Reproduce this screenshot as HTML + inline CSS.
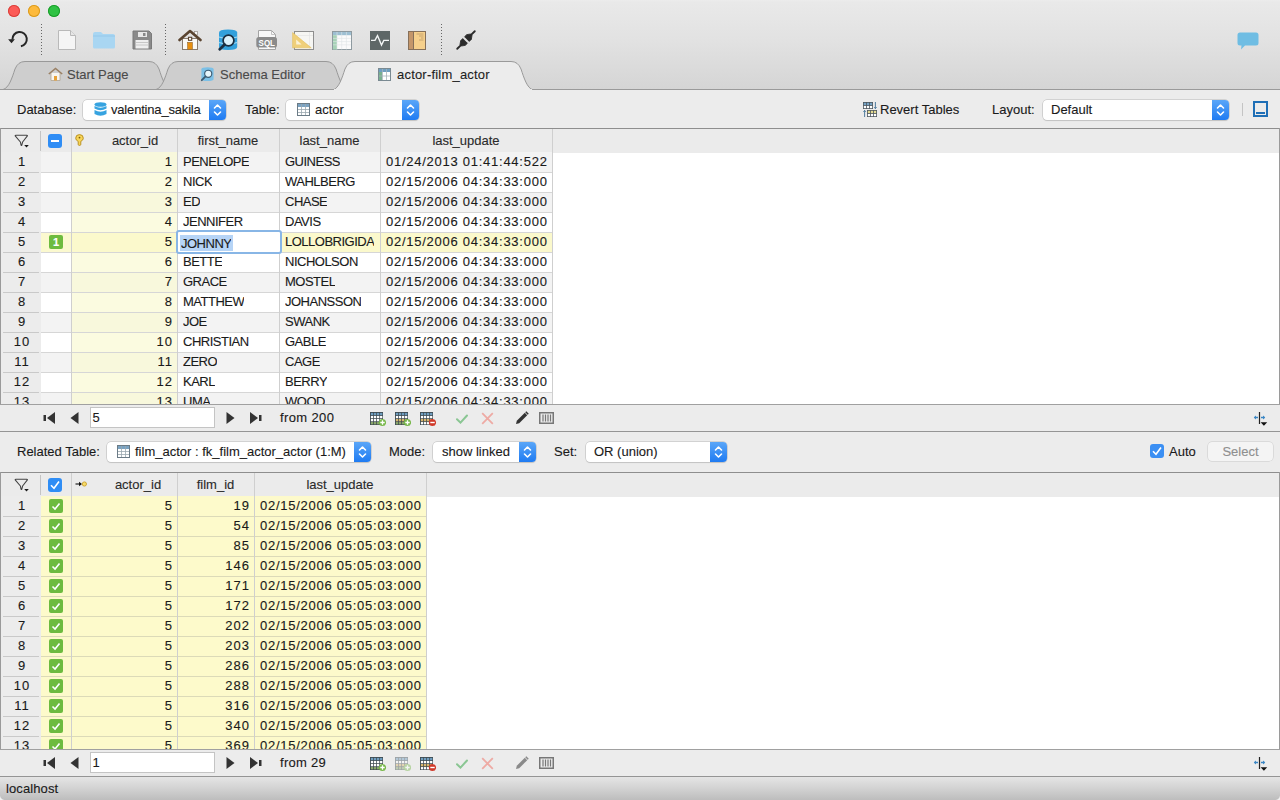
<!DOCTYPE html><html><head><meta charset="utf-8"><style>
*{margin:0;padding:0;box-sizing:border-box}
html,body{width:1280px;height:800px;overflow:hidden;background:#ececec;font-family:"Liberation Sans",sans-serif;font-size:13px;color:#1a1a1a;position:relative;-webkit-text-stroke:0.12px currentColor}
.a{position:absolute}
.t{position:absolute;white-space:nowrap;line-height:16px}
.tb{left:0;top:0;width:1280px;height:90px;background:linear-gradient(#ececec 0px,#e9e9e9 2px,#e2e2e2 40px,#d5d5d5 89px)}
.sep{position:absolute;width:1px;top:24px;height:31px;background:repeating-linear-gradient(#666 0 1px,transparent 1px 3px)}
.line{position:absolute;background:#b4b4b4}
.combo{position:absolute;height:20px;background:#fff;border-radius:4px;box-shadow:0 0 0 0.5px #b8b8b8,0 1px 1px rgba(0,0,0,.12)}
.combo .bl{position:absolute;right:0;top:0;bottom:0;width:17px;border-radius:0 4px 4px 0;background:linear-gradient(#5aa6f8,#1f7bf2)}
.combo .bl svg{position:absolute;left:4px;top:3px}
.grid{position:absolute;left:0;width:1280px;background:#fff;overflow:hidden}
.hdr{position:absolute;left:0;top:0;width:1280px;height:24px;background:#ebebeb}
.vl{position:absolute;width:1px;background:#cfcfcf}
.hl{position:absolute;height:1px;background:#d6d6d6}
.cell{position:absolute;height:20px;line-height:20px;white-space:nowrap;overflow:hidden}
.nav{position:absolute;left:0;width:1280px;height:26px;background:#ececec}
.inp{position:absolute;height:21px;background:#fff;box-shadow:0 0 0 1px #c4c4c4 inset;line-height:22px;padding-left:2.5px}
</style></head><body><div class="a tb"></div><div class="a" style="left:8px;top:5px;width:12px;height:12px;border-radius:50%;background:#fc5b57;box-shadow:0 0 0 1px #d9403b inset"></div><div class="a" style="left:28px;top:5px;width:12px;height:12px;border-radius:50%;background:#fdba3c;box-shadow:0 0 0 1px #d99a1e inset"></div><div class="a" style="left:48px;top:5px;width:12px;height:12px;border-radius:50%;background:#2fc243;box-shadow:0 0 0 1px #1a9c2a inset"></div><svg class="a" style="left:7px;top:30px" width="22" height="19" viewBox="0 0 22 19"><path d="M5.4 9.6 A7.2 7.2 0 1 1 13.9 16.3" stroke="#262626" stroke-width="2" fill="none"/><path d="M1.1 9.2 L7.9 9.2 L4.5 13.2 Z" fill="#262626"/></svg><div class="sep" style="left:41px"></div><div class="sep" style="left:165px"></div><div class="sep" style="left:441px"></div><svg class="a" style="left:58px;top:30px" width="18" height="20" viewBox="0 0 18 20"><path d="M0.5 0.5 H12.5 L17.5 5.5 V19.5 H0.5 Z" fill="#f5f5f5" stroke="#b9b9b9"/><path d="M12.5 0.5 V5.5 H17.5" fill="#e6e6e6" stroke="#b9b9b9"/></svg><svg class="a" style="left:92px;top:31px" width="24" height="18" viewBox="0 0 24 18"><path d="M1 3 Q1 1 3 1 H9 L11 3 H21 Q23 3 23 5 V16 Q23 17.5 21.5 17.5 H2.5 Q1 17.5 1 16 Z" fill="#a9d6f2"/><path d="M1 5 H23" stroke="#95c8ea" stroke-width="1"/></svg><svg class="a" style="left:132px;top:30px" width="20" height="20" viewBox="0 0 20 20"><path d="M1 1 H17 L19.5 3.5 V19 H1 Z" fill="#8a8a8a" stroke="#7a7a7a"/><rect x="6" y="2" width="9" height="5" fill="#e8e8e8"/><rect x="11" y="3" width="2.5" height="3" fill="#888"/><rect x="3.5" y="10" width="13" height="8.5" fill="#efefef"/><path d="M4 12.5H16M4 15H16" stroke="#c8c8c8"/></svg><svg class="a" style="left:178px;top:29px" width="24" height="22" viewBox="0 0 24 22"><rect x="4.5" y="9.5" width="15" height="11" fill="#fbfaf6" stroke="#8a7d70"/><rect x="16.5" y="2.5" width="3" height="3.5" fill="#fafafa" stroke="#a09a94" stroke-width="0.8"/><path d="M1.5 11 L12 2 L22.5 11" fill="none" stroke="#5a4430" stroke-width="2.6" stroke-linejoin="round" stroke-linecap="round"/><rect x="10.5" y="8.3" width="3.2" height="3" fill="#fff" stroke="#5a4430" stroke-width="1.1"/><rect x="9.6" y="13.3" width="4.8" height="7" fill="#e8900f" stroke="#9a6a30" stroke-width="0.6"/></svg><svg class="a" style="left:217px;top:29px" width="22" height="22" viewBox="0 0 22 22"><path d="M2 3.5 Q2 0.6 11 0.6 Q20.2 0.6 20.2 3.5 V18 Q20.2 21 11 21 Q2 21 2 18 Z" fill="#32a0dc"/><path d="M2 8 Q11 11 20.2 8 M2 13.5 Q11 16.5 20.2 13.5" stroke="#9ad8f4" stroke-width="1.3" fill="none"/><circle cx="11.5" cy="11.5" r="5.4" fill="#dbf1fb" stroke="#1b2f42" stroke-width="1.7"/><path d="M7.6 15.6 L2.8 20.2" stroke="#1b2f42" stroke-width="2.8" stroke-linecap="round"/></svg><svg class="a" style="left:256px;top:30px" width="22" height="20" viewBox="0 0 22 20"><path d="M2.5 0.5 H15.5 L19.5 4.5 V19.5 H2.5 Z" fill="#f8f8f8" stroke="#a3a3a3"/><path d="M15.5 0.5 V4.5 H19.5" fill="none" stroke="#b5b5b5" stroke-width="0.8"/><rect x="0.3" y="7" width="20.7" height="10.5" rx="2.6" fill="#8b8b8b"/><text x="2.6" y="15.8" font-family="Liberation Sans" font-size="9.6" font-weight="bold" fill="#fff" textLength="16.4" lengthAdjust="spacingAndGlyphs" style="-webkit-text-stroke:0">SQL</text></svg><svg class="a" style="left:292px;top:31px" width="22" height="19" viewBox="0 0 22 19"><rect x="2.5" y="0.5" width="19" height="18" fill="#f6f6f3" stroke="#8e8e8e"/><path d="M3 4.5H21M17.5 1V18" stroke="#e2e2e2" stroke-width="0.6"/><path d="M0.6 1.6 L0.6 16.8 L19.2 16.8 Z" fill="#efcf7a" stroke="#e3bd5c" stroke-width="0.6" stroke-linejoin="round"/><path d="M4.2 8.4 L4.2 13.5 L9.6 13.5 Z" fill="#fbf2d6"/></svg><svg class="a" style="left:332px;top:31px" width="20" height="19" viewBox="0 0 20 19"><rect x="0.5" y="0.5" width="19" height="18" fill="#fbfbfb" stroke="#8e9aa0"/><rect x="1" y="1" width="18" height="3.2" fill="#9dbfd2"/><rect x="1" y="4.2" width="4" height="14.3" fill="#a6d2b6"/><path d="M5 1V18.5M9.7 1V18.5M14.4 1V18.5M1 7.4H19M1 10.6H19M1 13.8H19" stroke="#dfe4e6" stroke-width="0.6"/></svg><svg class="a" style="left:370px;top:31px" width="20" height="19" viewBox="0 0 20 19"><rect x="0" y="0" width="20" height="19" fill="#5e6767" /><path d="M1 9.4 H5 L7.5 4.6 L11.5 14 L13.8 9.4 H19" stroke="#f2f5f5" stroke-width="1.4" fill="none" stroke-linejoin="miter"/></svg><svg class="a" style="left:408px;top:31px" width="18" height="19" viewBox="0 0 18 19"><rect x="0.5" y="0.5" width="17" height="18" fill="#f6d08c" stroke="#86705a"/><rect x="0.5" y="0.5" width="5" height="18" fill="#c4966a" stroke="#86705a"/><path d="M8.5 3H15.5M11 5H15.5M13 7H15.5M11 9H15.5" stroke="#9a7a50" stroke-width="0.5"/></svg><svg class="a" style="left:454px;top:28px" width="24" height="24" viewBox="0 0 24 24"><g transform="translate(12,12) rotate(-45)" fill="#2b2b2b" stroke="#2b2b2b" stroke-linejoin="round" stroke-width="0.8"><path d="M-1.3 -3.3 H-4.3 L-7.6 -0.9 V0.9 L-4.3 3.3 H-1.3 Z"/><path d="M1.3 -3.3 H4.3 L7.6 -0.9 V0.9 L4.3 3.3 H1.3 Z"/><path d="M-7.5 0 H-12.4 M7.5 0 H12.4" stroke-width="1.9" stroke-linecap="round"/></g></svg><svg class="a" style="left:1237px;top:32px" width="22" height="19" viewBox="0 0 22 19"><path d="M3 0.5 H19 Q21.5 0.5 21.5 3 V11 Q21.5 13.5 19 13.5 H8 L4 17.5 L4.5 13.5 H3 Q0.5 13.5 0.5 11 V3 Q0.5 0.5 3 0.5 Z" fill="#6fbde3"/></svg><svg class="a" style="left:0;top:58px" width="1280" height="32" viewBox="0 58 1280 32"><path d="M3 89.5 C9 88 12 78 15 69 Q18 61.5 25 61.5 L149 61.5 Q156 61.5 159 69 C162 78 165 88 171 89.5 Z" fill="#cecece" stroke="#999"/><path d="M156 89.5 C162 88 165 78 168 69 Q171 61.5 178 61.5 L326 61.5 Q333 61.5 336 69 C339 78 342 88 348 89.5 Z" fill="#cecece" stroke="#999"/><line x1="0" y1="89.5" x2="1280" y2="89.5" stroke="#9a9a9a"/><path d="M333 90 C339 88 342 78 345 69 Q348 61.5 355 61.5 L511 61.5 Q518 61.5 521 69 C524 78 527 88 533 90 Z" fill="#ececec" stroke="#9a9a9a"/><rect x="334" y="89" width="198" height="2" fill="#ececec"/></svg><svg class="a" style="left:48px;top:67px" width="15" height="14" viewBox="0 0 15 14"><path d="M3 6 V13.5 H12 V6" fill="#f8f6f0" stroke="#b3a48f" stroke-width="0.8"/><path d="M0.8 7 L7.5 1.5 L14.2 7" fill="none" stroke="#9a8064" stroke-width="1.6"/><rect x="6" y="9" width="3" height="4.5" fill="#e7a23a"/></svg><div class="t" style="left:67px;top:67px;color:#4a4a4a">Start Page</div><svg class="a" style="left:200px;top:67px" width="15" height="15" viewBox="0 0 21 21"><path d="M2 3 Q2 0.5 10.5 0.5 Q19 0.5 19 3 V17 Q19 19.5 10.5 19.5 Q2 19.5 2 17 Z" fill="#7cc0e6"/><circle cx="11.5" cy="9.5" r="5" fill="#e6f5fb" stroke="#3c5a70" stroke-width="1.6"/><path d="M7.8 13.2 L2.5 18.5" stroke="#3c5a70" stroke-width="2.6" stroke-linecap="round"/></svg><div class="t" style="left:220px;top:67px;color:#4a4a4a">Schema Editor</div><svg class="a" style="left:378px;top:68px" width="13" height="13" viewBox="0 0 13 13"><rect x="0.5" y="0.5" width="12" height="12" fill="#fff" stroke="#7a8a92"/><rect x="1" y="1" width="11" height="3" fill="#6f9fc0"/><rect x="1" y="4" width="3" height="8" fill="#79b08f"/><path d="M4.5 1V12M8.5 1V12M1 8H12" stroke="#a8b4ba" stroke-width="0.8"/></svg><div class="t" style="left:397px;top:67px;color:#1e1e1e;letter-spacing:0.2px">actor-film_actor</div><div class="t" style="left:17px;top:102px">Database:</div><div class="combo" style="left:83px;top:100px;width:143px"><div class="bl"><svg width="9" height="14" viewBox="0 0 9 14"><path d="M1.5 5 L4.5 2 L7.5 5 M1.5 9 L4.5 12 L7.5 9" stroke="#fff" stroke-width="1.6" fill="none" stroke-linecap="round" stroke-linejoin="round"/></svg></div></div><svg class="a" style="left:94px;top:102px" width="13" height="15" viewBox="0 0 13 15"><ellipse cx="6.5" cy="2.5" rx="6" ry="2.3" fill="#36a3e0"/><path d="M0.5 4 Q6.5 7.5 12.5 4 V6.5 Q6.5 10 0.5 6.5 Z M0.5 8 Q6.5 11.5 12.5 8 V12 Q6.5 15.5 0.5 12 Z" fill="#36a3e0"/></svg><div class="t" style="left:111px;top:102px;letter-spacing:-0.18px">valentina_sakila</div><div class="t" style="left:245px;top:102px">Table:</div><div class="combo" style="left:286px;top:100px;width:133px"><div class="bl"><svg width="9" height="14" viewBox="0 0 9 14"><path d="M1.5 5 L4.5 2 L7.5 5 M1.5 9 L4.5 12 L7.5 9" stroke="#fff" stroke-width="1.6" fill="none" stroke-linecap="round" stroke-linejoin="round"/></svg></div></div><svg class="a" style="left:297px;top:103px" width="13" height="13" viewBox="0 0 13 13"><rect x="0.5" y="0.5" width="12" height="12" fill="#fff" stroke="#6b7b86"/><rect x="1" y="1" width="11" height="3" fill="#7ba3c2"/><path d="M4.5 1V12M8.5 1V12M1 6.5H12M1 9.5H12" stroke="#9aa8b0" stroke-width="0.8"/></svg><div class="t" style="left:315px;top:102px">actor</div><svg class="a" style="left:862px;top:101px" width="16" height="17" viewBox="0 0 16 17"><rect x="1" y="1" width="10" height="7" fill="#4f5961"/><rect x="1.80" y="1.80" width="2.27" height="2.30" fill="#77a3c4"/><rect x="4.87" y="1.80" width="2.27" height="2.30" fill="#77a3c4"/><rect x="7.93" y="1.80" width="2.27" height="2.30" fill="#77a3c4"/><rect x="1.80" y="4.90" width="2.27" height="2.30" fill="#ffffff"/><rect x="4.87" y="4.90" width="2.27" height="2.30" fill="#ffffff"/><rect x="7.93" y="4.90" width="2.27" height="2.30" fill="#ffffff"/><rect x="5" y="9" width="10" height="7" fill="#4f5961"/><rect x="5.80" y="9.80" width="2.27" height="2.30" fill="#e3da92"/><rect x="8.87" y="9.80" width="2.27" height="2.30" fill="#e3da92"/><rect x="11.93" y="9.80" width="2.27" height="2.30" fill="#e3da92"/><rect x="5.80" y="12.90" width="2.27" height="2.30" fill="#ffffff"/><rect x="8.87" y="12.90" width="2.27" height="2.30" fill="#ffffff"/><rect x="11.93" y="12.90" width="2.27" height="2.30" fill="#ffffff"/><path d="M13.4 1V7.5M12.2 6.2L13.4 7.6L14.6 6.2" stroke="#3f6f95" stroke-width="0.9" fill="none"/><path d="M2.6 16V9.5M1.4 10.8L2.6 9.4L3.8 10.8" stroke="#3f6f95" stroke-width="0.9" fill="none"/></svg><div class="t" style="left:880px;top:102px">Revert Tables</div><div class="t" style="left:992px;top:102px">Layout:</div><div class="combo" style="left:1043px;top:100px;width:186px"><div class="bl"><svg width="9" height="14" viewBox="0 0 9 14"><path d="M1.5 5 L4.5 2 L7.5 5 M1.5 9 L4.5 12 L7.5 9" stroke="#fff" stroke-width="1.6" fill="none" stroke-linecap="round" stroke-linejoin="round"/></svg></div></div><div class="t" style="left:1051px;top:102px">Default</div><div class="a" style="left:1242px;top:103px;width:1px;height:13px;background:#c4c4c4"></div><div class="a" style="left:1253px;top:101px;width:15px;height:16px;border:2px solid #1f6fb6"></div><div class="a" style="left:1256px;top:112px;width:9px;height:2px;background:#1f6fb6"></div><div class="grid" style="top:128px;height:277px"><div class="a" style="left:0;top:0;width:1280px;height:1px;background:#8e8e8e"></div><div class="hdr" style="top:1px"></div><div class="a" style="left:1px;top:24px;width:40px;height:20px;background:#ececec"></div><div class="a" style="left:41px;top:24px;width:30px;height:20px;background:#f3f3f3"></div><div class="a" style="left:72px;top:24px;width:105px;height:20px;background:#f8f8dc"></div><div class="a" style="left:178px;top:24px;width:101px;height:20px;background:#f3f3f3"></div><div class="a" style="left:280px;top:24px;width:100px;height:20px;background:#f3f3f3"></div><div class="a" style="left:381px;top:24px;width:171px;height:20px;background:#f3f3f3"></div><div class="a" style="left:1px;top:44px;width:40px;height:20px;background:#ececec"></div><div class="a" style="left:41px;top:44px;width:30px;height:20px;background:#ffffff"></div><div class="a" style="left:72px;top:44px;width:105px;height:20px;background:#fbfbe0"></div><div class="a" style="left:178px;top:44px;width:101px;height:20px;background:#ffffff"></div><div class="a" style="left:280px;top:44px;width:100px;height:20px;background:#ffffff"></div><div class="a" style="left:381px;top:44px;width:171px;height:20px;background:#ffffff"></div><div class="a" style="left:1px;top:64px;width:40px;height:20px;background:#ececec"></div><div class="a" style="left:41px;top:64px;width:30px;height:20px;background:#f3f3f3"></div><div class="a" style="left:72px;top:64px;width:105px;height:20px;background:#f8f8dc"></div><div class="a" style="left:178px;top:64px;width:101px;height:20px;background:#f3f3f3"></div><div class="a" style="left:280px;top:64px;width:100px;height:20px;background:#f3f3f3"></div><div class="a" style="left:381px;top:64px;width:171px;height:20px;background:#f3f3f3"></div><div class="a" style="left:1px;top:84px;width:40px;height:20px;background:#ececec"></div><div class="a" style="left:41px;top:84px;width:30px;height:20px;background:#ffffff"></div><div class="a" style="left:72px;top:84px;width:105px;height:20px;background:#fbfbe0"></div><div class="a" style="left:178px;top:84px;width:101px;height:20px;background:#ffffff"></div><div class="a" style="left:280px;top:84px;width:100px;height:20px;background:#ffffff"></div><div class="a" style="left:381px;top:84px;width:171px;height:20px;background:#ffffff"></div><div class="a" style="left:1px;top:104px;width:40px;height:20px;background:#ececec"></div><div class="a" style="left:41px;top:104px;width:30px;height:20px;background:#fbf9cf"></div><div class="a" style="left:72px;top:104px;width:105px;height:20px;background:#fbf9cc"></div><div class="a" style="left:178px;top:104px;width:101px;height:20px;background:#f3f3f3"></div><div class="a" style="left:280px;top:104px;width:100px;height:20px;background:#fbf9cc"></div><div class="a" style="left:381px;top:104px;width:171px;height:20px;background:#fbf9cc"></div><div class="a" style="left:1px;top:124px;width:40px;height:20px;background:#ececec"></div><div class="a" style="left:41px;top:124px;width:30px;height:20px;background:#ffffff"></div><div class="a" style="left:72px;top:124px;width:105px;height:20px;background:#fbfbe0"></div><div class="a" style="left:178px;top:124px;width:101px;height:20px;background:#ffffff"></div><div class="a" style="left:280px;top:124px;width:100px;height:20px;background:#ffffff"></div><div class="a" style="left:381px;top:124px;width:171px;height:20px;background:#ffffff"></div><div class="a" style="left:1px;top:144px;width:40px;height:20px;background:#ececec"></div><div class="a" style="left:41px;top:144px;width:30px;height:20px;background:#f3f3f3"></div><div class="a" style="left:72px;top:144px;width:105px;height:20px;background:#f8f8dc"></div><div class="a" style="left:178px;top:144px;width:101px;height:20px;background:#f3f3f3"></div><div class="a" style="left:280px;top:144px;width:100px;height:20px;background:#f3f3f3"></div><div class="a" style="left:381px;top:144px;width:171px;height:20px;background:#f3f3f3"></div><div class="a" style="left:1px;top:164px;width:40px;height:20px;background:#ececec"></div><div class="a" style="left:41px;top:164px;width:30px;height:20px;background:#ffffff"></div><div class="a" style="left:72px;top:164px;width:105px;height:20px;background:#fbfbe0"></div><div class="a" style="left:178px;top:164px;width:101px;height:20px;background:#ffffff"></div><div class="a" style="left:280px;top:164px;width:100px;height:20px;background:#ffffff"></div><div class="a" style="left:381px;top:164px;width:171px;height:20px;background:#ffffff"></div><div class="a" style="left:1px;top:184px;width:40px;height:20px;background:#ececec"></div><div class="a" style="left:41px;top:184px;width:30px;height:20px;background:#f3f3f3"></div><div class="a" style="left:72px;top:184px;width:105px;height:20px;background:#f8f8dc"></div><div class="a" style="left:178px;top:184px;width:101px;height:20px;background:#f3f3f3"></div><div class="a" style="left:280px;top:184px;width:100px;height:20px;background:#f3f3f3"></div><div class="a" style="left:381px;top:184px;width:171px;height:20px;background:#f3f3f3"></div><div class="a" style="left:1px;top:204px;width:40px;height:20px;background:#ececec"></div><div class="a" style="left:41px;top:204px;width:30px;height:20px;background:#ffffff"></div><div class="a" style="left:72px;top:204px;width:105px;height:20px;background:#fbfbe0"></div><div class="a" style="left:178px;top:204px;width:101px;height:20px;background:#ffffff"></div><div class="a" style="left:280px;top:204px;width:100px;height:20px;background:#ffffff"></div><div class="a" style="left:381px;top:204px;width:171px;height:20px;background:#ffffff"></div><div class="a" style="left:1px;top:224px;width:40px;height:20px;background:#ececec"></div><div class="a" style="left:41px;top:224px;width:30px;height:20px;background:#f3f3f3"></div><div class="a" style="left:72px;top:224px;width:105px;height:20px;background:#f8f8dc"></div><div class="a" style="left:178px;top:224px;width:101px;height:20px;background:#f3f3f3"></div><div class="a" style="left:280px;top:224px;width:100px;height:20px;background:#f3f3f3"></div><div class="a" style="left:381px;top:224px;width:171px;height:20px;background:#f3f3f3"></div><div class="a" style="left:1px;top:244px;width:40px;height:20px;background:#ececec"></div><div class="a" style="left:41px;top:244px;width:30px;height:20px;background:#ffffff"></div><div class="a" style="left:72px;top:244px;width:105px;height:20px;background:#fbfbe0"></div><div class="a" style="left:178px;top:244px;width:101px;height:20px;background:#ffffff"></div><div class="a" style="left:280px;top:244px;width:100px;height:20px;background:#ffffff"></div><div class="a" style="left:381px;top:244px;width:171px;height:20px;background:#ffffff"></div><div class="a" style="left:1px;top:264px;width:40px;height:20px;background:#ececec"></div><div class="a" style="left:41px;top:264px;width:30px;height:20px;background:#f3f3f3"></div><div class="a" style="left:72px;top:264px;width:105px;height:20px;background:#f8f8dc"></div><div class="a" style="left:178px;top:264px;width:101px;height:20px;background:#f3f3f3"></div><div class="a" style="left:280px;top:264px;width:100px;height:20px;background:#f3f3f3"></div><div class="a" style="left:381px;top:264px;width:171px;height:20px;background:#f3f3f3"></div><div class="hl" style="left:3px;top:44px;width:36px;background:#c9c9c9"></div><div class="hl" style="left:41px;top:44px;width:511px"></div><div class="hl" style="left:3px;top:64px;width:36px;background:#c9c9c9"></div><div class="hl" style="left:41px;top:64px;width:511px"></div><div class="hl" style="left:3px;top:84px;width:36px;background:#c9c9c9"></div><div class="hl" style="left:41px;top:84px;width:511px"></div><div class="hl" style="left:3px;top:104px;width:36px;background:#c9c9c9"></div><div class="hl" style="left:41px;top:104px;width:511px"></div><div class="hl" style="left:3px;top:124px;width:36px;background:#c9c9c9"></div><div class="hl" style="left:41px;top:124px;width:511px"></div><div class="hl" style="left:3px;top:144px;width:36px;background:#c9c9c9"></div><div class="hl" style="left:41px;top:144px;width:511px"></div><div class="hl" style="left:3px;top:164px;width:36px;background:#c9c9c9"></div><div class="hl" style="left:41px;top:164px;width:511px"></div><div class="hl" style="left:3px;top:184px;width:36px;background:#c9c9c9"></div><div class="hl" style="left:41px;top:184px;width:511px"></div><div class="hl" style="left:3px;top:204px;width:36px;background:#c9c9c9"></div><div class="hl" style="left:41px;top:204px;width:511px"></div><div class="hl" style="left:3px;top:224px;width:36px;background:#c9c9c9"></div><div class="hl" style="left:41px;top:224px;width:511px"></div><div class="hl" style="left:3px;top:244px;width:36px;background:#c9c9c9"></div><div class="hl" style="left:41px;top:244px;width:511px"></div><div class="hl" style="left:3px;top:264px;width:36px;background:#c9c9c9"></div><div class="hl" style="left:41px;top:264px;width:511px"></div><div class="hl" style="left:3px;top:284px;width:36px;background:#c9c9c9"></div><div class="hl" style="left:41px;top:284px;width:511px"></div><div class="vl" style="left:40px;top:3px;height:20px;background:#c4c4c4"></div><div class="vl" style="left:71px;top:1px;height:276px"></div><div class="vl" style="left:177px;top:1px;height:276px"></div><div class="vl" style="left:279px;top:1px;height:276px"></div><div class="vl" style="left:380px;top:1px;height:276px"></div><div class="vl" style="left:552px;top:1px;height:276px"></div><div class="a" style="left:0;top:0;width:1px;height:277px;background:#9a9a9a"></div><div class="a" style="left:1279px;top:0;width:1px;height:277px;background:#9a9a9a"></div><div class="a" style="left:0;top:276px;width:1280px;height:1px;background:#a0a0a0"></div><div class="cell" style="left:2px;top:24px;width:40px;text-align:center;letter-spacing:1.00px;">1</div><div class="cell" style="left:72px;top:24px;width:101px;text-align:right;letter-spacing:1.00px;">1</div><div class="cell" style="left:183px;top:24px;letter-spacing:-0.50px;">PENELOPE</div><div class="cell" style="left:285px;top:24px;letter-spacing:-0.50px;">GUINESS</div><div class="cell" style="left:386px;top:24px;letter-spacing:0.74px;">01/24/2013 01:41:44:522</div><div class="cell" style="left:2px;top:44px;width:40px;text-align:center;letter-spacing:1.00px;">2</div><div class="cell" style="left:72px;top:44px;width:101px;text-align:right;letter-spacing:1.00px;">2</div><div class="cell" style="left:183px;top:44px;letter-spacing:-0.50px;">NICK</div><div class="cell" style="left:285px;top:44px;letter-spacing:-0.50px;">WAHLBERG</div><div class="cell" style="left:386px;top:44px;letter-spacing:0.74px;">02/15/2006 04:34:33:000</div><div class="cell" style="left:2px;top:64px;width:40px;text-align:center;letter-spacing:1.00px;">3</div><div class="cell" style="left:72px;top:64px;width:101px;text-align:right;letter-spacing:1.00px;">3</div><div class="cell" style="left:183px;top:64px;letter-spacing:-0.50px;">ED</div><div class="cell" style="left:285px;top:64px;letter-spacing:-0.50px;">CHASE</div><div class="cell" style="left:386px;top:64px;letter-spacing:0.74px;">02/15/2006 04:34:33:000</div><div class="cell" style="left:2px;top:84px;width:40px;text-align:center;letter-spacing:1.00px;">4</div><div class="cell" style="left:72px;top:84px;width:101px;text-align:right;letter-spacing:1.00px;">4</div><div class="cell" style="left:183px;top:84px;letter-spacing:-0.50px;">JENNIFER</div><div class="cell" style="left:285px;top:84px;letter-spacing:-0.50px;">DAVIS</div><div class="cell" style="left:386px;top:84px;letter-spacing:0.74px;">02/15/2006 04:34:33:000</div><div class="cell" style="left:2px;top:104px;width:40px;text-align:center;letter-spacing:1.00px;">5</div><div class="a" style="left:49px;top:107px;width:14px;height:14px;border-radius:2px;background:#6dbb3f;color:#fff;font-size:11px;line-height:14px;text-align:center;font-weight:bold">1</div><div class="cell" style="left:72px;top:104px;width:101px;text-align:right;letter-spacing:1.00px;">5</div><div class="a" style="left:176px;top:102px;width:106px;height:24px;background:#fff;border:2.5px solid #88b6e6;border-radius:3px"></div><div class="a" style="left:180px;top:107px;width:53px;height:16px;background:#b6d4f6"></div><div class="cell" style="left:181px;top:106px;letter-spacing:-0.50px;">JOHNNY</div><div class="cell" style="left:285px;top:104px;letter-spacing:-0.50px;">LOLLOBRIGIDA</div><div class="cell" style="left:386px;top:104px;letter-spacing:0.74px;">02/15/2006 04:34:33:000</div><div class="cell" style="left:2px;top:124px;width:40px;text-align:center;letter-spacing:1.00px;">6</div><div class="cell" style="left:72px;top:124px;width:101px;text-align:right;letter-spacing:1.00px;">6</div><div class="cell" style="left:183px;top:124px;letter-spacing:-0.50px;">BETTE</div><div class="cell" style="left:285px;top:124px;letter-spacing:-0.50px;">NICHOLSON</div><div class="cell" style="left:386px;top:124px;letter-spacing:0.74px;">02/15/2006 04:34:33:000</div><div class="cell" style="left:2px;top:144px;width:40px;text-align:center;letter-spacing:1.00px;">7</div><div class="cell" style="left:72px;top:144px;width:101px;text-align:right;letter-spacing:1.00px;">7</div><div class="cell" style="left:183px;top:144px;letter-spacing:-0.50px;">GRACE</div><div class="cell" style="left:285px;top:144px;letter-spacing:-0.50px;">MOSTEL</div><div class="cell" style="left:386px;top:144px;letter-spacing:0.74px;">02/15/2006 04:34:33:000</div><div class="cell" style="left:2px;top:164px;width:40px;text-align:center;letter-spacing:1.00px;">8</div><div class="cell" style="left:72px;top:164px;width:101px;text-align:right;letter-spacing:1.00px;">8</div><div class="cell" style="left:183px;top:164px;letter-spacing:-0.50px;">MATTHEW</div><div class="cell" style="left:285px;top:164px;letter-spacing:-0.50px;">JOHANSSON</div><div class="cell" style="left:386px;top:164px;letter-spacing:0.74px;">02/15/2006 04:34:33:000</div><div class="cell" style="left:2px;top:184px;width:40px;text-align:center;letter-spacing:1.00px;">9</div><div class="cell" style="left:72px;top:184px;width:101px;text-align:right;letter-spacing:1.00px;">9</div><div class="cell" style="left:183px;top:184px;letter-spacing:-0.50px;">JOE</div><div class="cell" style="left:285px;top:184px;letter-spacing:-0.50px;">SWANK</div><div class="cell" style="left:386px;top:184px;letter-spacing:0.74px;">02/15/2006 04:34:33:000</div><div class="cell" style="left:2px;top:204px;width:40px;text-align:center;letter-spacing:1.00px;">10</div><div class="cell" style="left:72px;top:204px;width:101px;text-align:right;letter-spacing:1.00px;">10</div><div class="cell" style="left:183px;top:204px;letter-spacing:-0.50px;">CHRISTIAN</div><div class="cell" style="left:285px;top:204px;letter-spacing:-0.50px;">GABLE</div><div class="cell" style="left:386px;top:204px;letter-spacing:0.74px;">02/15/2006 04:34:33:000</div><div class="cell" style="left:2px;top:224px;width:40px;text-align:center;letter-spacing:1.00px;">11</div><div class="cell" style="left:72px;top:224px;width:101px;text-align:right;letter-spacing:1.00px;">11</div><div class="cell" style="left:183px;top:224px;letter-spacing:-0.50px;">ZERO</div><div class="cell" style="left:285px;top:224px;letter-spacing:-0.50px;">CAGE</div><div class="cell" style="left:386px;top:224px;letter-spacing:0.74px;">02/15/2006 04:34:33:000</div><div class="cell" style="left:2px;top:244px;width:40px;text-align:center;letter-spacing:1.00px;">12</div><div class="cell" style="left:72px;top:244px;width:101px;text-align:right;letter-spacing:1.00px;">12</div><div class="cell" style="left:183px;top:244px;letter-spacing:-0.50px;">KARL</div><div class="cell" style="left:285px;top:244px;letter-spacing:-0.50px;">BERRY</div><div class="cell" style="left:386px;top:244px;letter-spacing:0.74px;">02/15/2006 04:34:33:000</div><div class="cell" style="left:2px;top:264px;width:40px;text-align:center;letter-spacing:1.00px;">13</div><div class="cell" style="left:72px;top:264px;width:101px;text-align:right;letter-spacing:1.00px;">13</div><div class="cell" style="left:183px;top:264px;letter-spacing:-0.50px;">UMA</div><div class="cell" style="left:285px;top:264px;letter-spacing:-0.50px;">WOOD</div><div class="cell" style="left:386px;top:264px;letter-spacing:0.74px;">02/15/2006 04:34:33:000</div><div class="a" style="left:0;top:276px;width:1280px;height:1px;background:#a0a0a0"></div><svg class="a" style="left:14px;top:6px" width="16" height="15" viewBox="0 0 16 15"><path d="M1.8 1.2 H12.8 Q13.8 1.2 13.2 2.2 L8.6 8 L7.8 11.2 Q7.4 12 7 11 L6.4 8 L1.4 2.2 Q0.8 1.2 1.8 1.2 Z" fill="none" stroke="#444" stroke-width="1.1" stroke-linejoin="round"/><path d="M10.2 11 H14.8 L12.5 13.6 Z" fill="#1a1a1a"/></svg><div class="a" style="left:48px;top:6px;width:14px;height:14px;border-radius:3px;background:#2f8df5"><div class="a" style="left:3px;top:6px;width:8px;height:2px;background:#fff"></div></div><svg class="a" style="left:75px;top:6px" width="9" height="12" viewBox="0 0 9 12"><path d="M4.5 0.6 Q8.3 0.6 8.3 4.2 Q8.3 6.2 5.8 7.4 V10.4 Q5.8 11.4 4.5 11.4 Q3.2 11.4 3.2 10.4 V7.4 Q0.7 6.2 0.7 4.2 Q0.7 0.6 4.5 0.6 Z" fill="#f7d558" stroke="#b48a1a" stroke-width="0.9"/><circle cx="4.5" cy="3.6" r="0.9" fill="#7a5a10"/></svg><div class="t" style="left:90px;top:5px;width:90px;text-align:center;color:#2a2a2a">actor_id</div><div class="t" style="left:177px;top:5px;width:102px;text-align:center;color:#2a2a2a">first_name</div><div class="t" style="left:279px;top:5px;width:101px;text-align:center;color:#2a2a2a">last_name</div><div class="t" style="left:380px;top:5px;width:172px;text-align:center;color:#2a2a2a">last_update</div></div><div class="nav" style="top:405px"></div><div class="a" style="left:0;top:431px;width:1280px;height:1px;background:#959595"></div><svg class="a" style="left:43px;top:412px" width="13" height="12" viewBox="0 0 13 12"><rect x="0.5" y="3" width="2.5" height="6" fill="#333"/><path d="M4 6 L12 0 V12 Z" fill="#333"/></svg><svg class="a" style="left:70px;top:412px" width="9" height="12" viewBox="0 0 9 12"><path d="M0.5 6 L8.5 0 V12 Z" fill="#333"/></svg><div class="inp" style="left:90px;top:407px;width:125px">5</div><svg class="a" style="left:226px;top:412px" width="9" height="12" viewBox="0 0 9 12"><path d="M8.5 6 L0.5 0 V12 Z" fill="#333"/></svg><svg class="a" style="left:249px;top:412px" width="13" height="12" viewBox="0 0 13 12"><path d="M9 6 L1 0 V12 Z" fill="#333"/><rect x="10" y="3" width="2.5" height="6" fill="#333"/></svg><div class="t" style="left:280px;top:410px;letter-spacing:0.38px;">from 200</div><svg class="a" style="left:370px;top:412px;opacity:1" width="16" height="15" viewBox="0 0 16 15"><rect x="0" y="0" width="13" height="13" fill="#404c52"/><rect x="0.90" y="0.90" width="2.3" height="2.3" fill="#6f9ec0"/><rect x="3.95" y="0.90" width="2.3" height="2.3" fill="#6f9ec0"/><rect x="7.00" y="0.90" width="2.3" height="2.3" fill="#6f9ec0"/><rect x="10.05" y="0.90" width="2.3" height="2.3" fill="#6f9ec0"/><rect x="0.90" y="3.95" width="2.3" height="2.3" fill="#ffffff"/><rect x="3.95" y="3.95" width="2.3" height="2.3" fill="#ffffff"/><rect x="7.00" y="3.95" width="2.3" height="2.3" fill="#ffffff"/><rect x="10.05" y="3.95" width="2.3" height="2.3" fill="#ffffff"/><rect x="0.90" y="7.00" width="2.3" height="2.3" fill="#ffffff"/><rect x="3.95" y="7.00" width="2.3" height="2.3" fill="#ffffff"/><rect x="7.00" y="7.00" width="2.3" height="2.3" fill="#ffffff"/><rect x="10.05" y="7.00" width="2.3" height="2.3" fill="#ffffff"/><rect x="0.90" y="10.05" width="2.3" height="2.3" fill="#8aa86a"/><rect x="3.95" y="10.05" width="2.3" height="2.3" fill="#8aa86a"/><rect x="7.00" y="10.05" width="2.3" height="2.3" fill="#8aa86a"/><rect x="10.05" y="10.05" width="2.3" height="2.3" fill="#8aa86a"/><circle cx="12.5" cy="10.5" r="3.6" fill="#78b84a"/><path d="M10.3 10.5H14.7M12.5 8.3V12.7" stroke="#fff" stroke-width="1.3"/></svg><svg class="a" style="left:395px;top:412px;opacity:1" width="16" height="15" viewBox="0 0 16 15"><rect x="0" y="0" width="13" height="13" fill="#404c52"/><rect x="0.90" y="0.90" width="2.3" height="2.3" fill="#6f9ec0"/><rect x="3.95" y="0.90" width="2.3" height="2.3" fill="#6f9ec0"/><rect x="7.00" y="0.90" width="2.3" height="2.3" fill="#6f9ec0"/><rect x="10.05" y="0.90" width="2.3" height="2.3" fill="#6f9ec0"/><rect x="0.90" y="3.95" width="2.3" height="2.3" fill="#ffffff"/><rect x="3.95" y="3.95" width="2.3" height="2.3" fill="#ffffff"/><rect x="7.00" y="3.95" width="2.3" height="2.3" fill="#ffffff"/><rect x="10.05" y="3.95" width="2.3" height="2.3" fill="#ffffff"/><rect x="0.90" y="7.00" width="2.3" height="2.3" fill="#d8b66e"/><rect x="3.95" y="7.00" width="2.3" height="2.3" fill="#d8b66e"/><rect x="7.00" y="7.00" width="2.3" height="2.3" fill="#d8b66e"/><rect x="10.05" y="7.00" width="2.3" height="2.3" fill="#d8b66e"/><rect x="0.90" y="10.05" width="2.3" height="2.3" fill="#8aa86a"/><rect x="3.95" y="10.05" width="2.3" height="2.3" fill="#8aa86a"/><rect x="7.00" y="10.05" width="2.3" height="2.3" fill="#8aa86a"/><rect x="10.05" y="10.05" width="2.3" height="2.3" fill="#8aa86a"/><circle cx="12.5" cy="10.5" r="3.6" fill="#78b84a"/><path d="M10.3 10.5H14.7M12.5 8.3V12.7" stroke="#fff" stroke-width="1.3"/></svg><svg class="a" style="left:420px;top:412px;opacity:1" width="16" height="15" viewBox="0 0 16 15"><rect x="0" y="0" width="13" height="13" fill="#404c52"/><rect x="0.90" y="0.90" width="2.3" height="2.3" fill="#6f9ec0"/><rect x="3.95" y="0.90" width="2.3" height="2.3" fill="#6f9ec0"/><rect x="7.00" y="0.90" width="2.3" height="2.3" fill="#6f9ec0"/><rect x="10.05" y="0.90" width="2.3" height="2.3" fill="#6f9ec0"/><rect x="0.90" y="3.95" width="2.3" height="2.3" fill="#ffffff"/><rect x="3.95" y="3.95" width="2.3" height="2.3" fill="#ffffff"/><rect x="7.00" y="3.95" width="2.3" height="2.3" fill="#ffffff"/><rect x="10.05" y="3.95" width="2.3" height="2.3" fill="#ffffff"/><rect x="0.90" y="7.00" width="2.3" height="2.3" fill="#d8b66e"/><rect x="3.95" y="7.00" width="2.3" height="2.3" fill="#d8b66e"/><rect x="7.00" y="7.00" width="2.3" height="2.3" fill="#d8b66e"/><rect x="10.05" y="7.00" width="2.3" height="2.3" fill="#d8b66e"/><rect x="0.90" y="10.05" width="2.3" height="2.3" fill="#ffffff"/><rect x="3.95" y="10.05" width="2.3" height="2.3" fill="#ffffff"/><rect x="7.00" y="10.05" width="2.3" height="2.3" fill="#ffffff"/><rect x="10.05" y="10.05" width="2.3" height="2.3" fill="#ffffff"/><circle cx="12.5" cy="10.5" r="3.6" fill="#d03a2a"/><path d="M10.3 10.5H14.7" stroke="#fff" stroke-width="1.4"/></svg><svg class="a" style="left:456px;top:414px" width="12" height="10" viewBox="0 0 12 10"><path d="M1 5.2 L4.5 8.6 L11 1.5" stroke="#8ac693" stroke-width="2" fill="none" stroke-linecap="round"/></svg><svg class="a" style="left:481px;top:412px" width="13" height="13" viewBox="0 0 13 13"><path d="M1.2 1.2 L11.8 11.8 M11.8 1.2 L1.2 11.8" stroke="#eeaaa4" stroke-width="1.8"/></svg><svg class="a" style="left:515px;top:411px" width="14" height="14" viewBox="0 0 14 14"><path d="M1 13 L1.8 9.8 L9.8 1.8 L12.2 4.2 L4.2 12.2 Z" fill="#333"/><path d="M10.8 0.8 L13.2 3.2" stroke="#333" stroke-width="1.6"/></svg><svg class="a" style="left:539px;top:412px" width="15" height="12" viewBox="0 0 15 12"><rect x="0.75" y="0.75" width="13.5" height="10.5" fill="none" stroke="#777" stroke-width="1.5"/><path d="M4 2.5V9.5M6.5 2.5V9.5M9 2.5V9.5M11.5 2.5V9.5" stroke="#777" stroke-width="1.2"/></svg><svg class="a" style="left:1253px;top:412px" width="15" height="14" viewBox="0 0 15 14"><path d="M6.5 0V12" stroke="#222" stroke-width="1.2"/><path d="M1.5 5.5H5M8 5.5H11.5" stroke="#3a86c4" stroke-width="1.5"/><path d="M0.8 5.5L3 3.6V7.4Z M12.2 5.5L10 3.6V7.4Z" fill="#3a86c4"/><path d="M7.6 10.2H14.2L10.9 13.8Z" fill="#111"/></svg><div class="t" style="left:17px;top:444px">Related Table:</div><div class="combo" style="left:107px;top:442px;width:264px"><div class="bl"><svg width="9" height="14" viewBox="0 0 9 14"><path d="M1.5 5 L4.5 2 L7.5 5 M1.5 9 L4.5 12 L7.5 9" stroke="#fff" stroke-width="1.6" fill="none" stroke-linecap="round" stroke-linejoin="round"/></svg></div></div><svg class="a" style="left:117px;top:445px" width="13" height="13" viewBox="0 0 13 13"><rect x="0.5" y="0.5" width="12" height="12" fill="#fff" stroke="#6b7b86"/><rect x="1" y="1" width="11" height="3" fill="#7ba3c2"/><path d="M4.5 1V12M8.5 1V12M1 6.5H12M1 9.5H12" stroke="#9aa8b0" stroke-width="0.8"/></svg><div class="t" style="left:135px;top:444px">film_actor : fk_film_actor_actor (1:M)</div><div class="t" style="left:389px;top:444px">Mode:</div><div class="combo" style="left:433px;top:442px;width:103px"><div class="bl"><svg width="9" height="14" viewBox="0 0 9 14"><path d="M1.5 5 L4.5 2 L7.5 5 M1.5 9 L4.5 12 L7.5 9" stroke="#fff" stroke-width="1.6" fill="none" stroke-linecap="round" stroke-linejoin="round"/></svg></div></div><div class="t" style="left:442px;top:444px">show linked</div><div class="t" style="left:554px;top:444px">Set:</div><div class="combo" style="left:586px;top:442px;width:141px"><div class="bl"><svg width="9" height="14" viewBox="0 0 9 14"><path d="M1.5 5 L4.5 2 L7.5 5 M1.5 9 L4.5 12 L7.5 9" stroke="#fff" stroke-width="1.6" fill="none" stroke-linecap="round" stroke-linejoin="round"/></svg></div></div><div class="t" style="left:594px;top:444px">OR (union)</div><div class="a" style="left:1150px;top:444px;width:14px;height:14px;border-radius:3px;background:#3b8ff3"></div><svg class="a" style="left:1150px;top:444px" width="14" height="14" viewBox="0 0 14 14"><path d="M3 7.2 L6 10.2 L11 3.5" stroke="#fff" stroke-width="1.6" fill="none"/></svg><div class="t" style="left:1169px;top:444px">Auto</div><div class="a" style="left:1208px;top:442px;width:65px;height:19px;border-radius:4px;background:#f4f4f4;box-shadow:0 0 0 0.5px #c8c8c8"></div><div class="t" style="left:1208px;top:444px;width:65px;text-align:center;color:#8f8f8f">Select</div><div class="grid" style="top:472px;height:278px"><div class="a" style="left:0;top:0;width:1280px;height:1px;background:#8e8e8e"></div><div class="hdr" style="top:1px"></div><div class="a" style="left:1px;top:24px;width:40px;height:20px;background:#ececec"></div><div class="a" style="left:41px;top:24px;width:385px;height:20px;background:#fdfacb"></div><div class="a" style="left:1px;top:44px;width:40px;height:20px;background:#ececec"></div><div class="a" style="left:41px;top:44px;width:385px;height:20px;background:#fdfacb"></div><div class="a" style="left:1px;top:64px;width:40px;height:20px;background:#ececec"></div><div class="a" style="left:41px;top:64px;width:385px;height:20px;background:#fdfacb"></div><div class="a" style="left:1px;top:84px;width:40px;height:20px;background:#ececec"></div><div class="a" style="left:41px;top:84px;width:385px;height:20px;background:#fdfacb"></div><div class="a" style="left:1px;top:104px;width:40px;height:20px;background:#ececec"></div><div class="a" style="left:41px;top:104px;width:385px;height:20px;background:#fdfacb"></div><div class="a" style="left:1px;top:124px;width:40px;height:20px;background:#ececec"></div><div class="a" style="left:41px;top:124px;width:385px;height:20px;background:#fdfacb"></div><div class="a" style="left:1px;top:144px;width:40px;height:20px;background:#ececec"></div><div class="a" style="left:41px;top:144px;width:385px;height:20px;background:#fdfacb"></div><div class="a" style="left:1px;top:164px;width:40px;height:20px;background:#ececec"></div><div class="a" style="left:41px;top:164px;width:385px;height:20px;background:#fdfacb"></div><div class="a" style="left:1px;top:184px;width:40px;height:20px;background:#ececec"></div><div class="a" style="left:41px;top:184px;width:385px;height:20px;background:#fdfacb"></div><div class="a" style="left:1px;top:204px;width:40px;height:20px;background:#ececec"></div><div class="a" style="left:41px;top:204px;width:385px;height:20px;background:#fdfacb"></div><div class="a" style="left:1px;top:224px;width:40px;height:20px;background:#ececec"></div><div class="a" style="left:41px;top:224px;width:385px;height:20px;background:#fdfacb"></div><div class="a" style="left:1px;top:244px;width:40px;height:20px;background:#ececec"></div><div class="a" style="left:41px;top:244px;width:385px;height:20px;background:#fdfacb"></div><div class="a" style="left:1px;top:264px;width:40px;height:20px;background:#ececec"></div><div class="a" style="left:41px;top:264px;width:385px;height:20px;background:#fdfacb"></div><div class="hl" style="left:3px;top:44px;width:36px;background:#c9c9c9"></div><div class="hl" style="left:41px;top:44px;width:385px;background:#dcdab8"></div><div class="hl" style="left:3px;top:64px;width:36px;background:#c9c9c9"></div><div class="hl" style="left:41px;top:64px;width:385px;background:#dcdab8"></div><div class="hl" style="left:3px;top:84px;width:36px;background:#c9c9c9"></div><div class="hl" style="left:41px;top:84px;width:385px;background:#dcdab8"></div><div class="hl" style="left:3px;top:104px;width:36px;background:#c9c9c9"></div><div class="hl" style="left:41px;top:104px;width:385px;background:#dcdab8"></div><div class="hl" style="left:3px;top:124px;width:36px;background:#c9c9c9"></div><div class="hl" style="left:41px;top:124px;width:385px;background:#dcdab8"></div><div class="hl" style="left:3px;top:144px;width:36px;background:#c9c9c9"></div><div class="hl" style="left:41px;top:144px;width:385px;background:#dcdab8"></div><div class="hl" style="left:3px;top:164px;width:36px;background:#c9c9c9"></div><div class="hl" style="left:41px;top:164px;width:385px;background:#dcdab8"></div><div class="hl" style="left:3px;top:184px;width:36px;background:#c9c9c9"></div><div class="hl" style="left:41px;top:184px;width:385px;background:#dcdab8"></div><div class="hl" style="left:3px;top:204px;width:36px;background:#c9c9c9"></div><div class="hl" style="left:41px;top:204px;width:385px;background:#dcdab8"></div><div class="hl" style="left:3px;top:224px;width:36px;background:#c9c9c9"></div><div class="hl" style="left:41px;top:224px;width:385px;background:#dcdab8"></div><div class="hl" style="left:3px;top:244px;width:36px;background:#c9c9c9"></div><div class="hl" style="left:41px;top:244px;width:385px;background:#dcdab8"></div><div class="hl" style="left:3px;top:264px;width:36px;background:#c9c9c9"></div><div class="hl" style="left:41px;top:264px;width:385px;background:#dcdab8"></div><div class="hl" style="left:3px;top:284px;width:36px;background:#c9c9c9"></div><div class="hl" style="left:41px;top:284px;width:385px;background:#dcdab8"></div><div class="vl" style="left:40px;top:3px;height:20px;background:#c4c4c4"></div><div class="vl" style="left:71px;top:1px;height:277px"></div><div class="vl" style="left:177px;top:1px;height:277px"></div><div class="vl" style="left:254px;top:1px;height:277px"></div><div class="vl" style="left:426px;top:1px;height:277px"></div><div class="a" style="left:0;top:0;width:1px;height:278px;background:#9a9a9a"></div><div class="a" style="left:1279px;top:0;width:1px;height:278px;background:#9a9a9a"></div><div class="a" style="left:0;top:277px;width:1280px;height:1px;background:#a0a0a0"></div><div class="cell" style="left:2px;top:24px;width:40px;text-align:center;letter-spacing:1.00px;">1</div><div class="a" style="left:49px;top:27px;width:14px;height:14px;border-radius:2px;background:#6dbb3f"></div><svg class="a" style="left:49px;top:27px" width="14" height="14" viewBox="0 0 14 14"><path d="M3.5 7.5 L6 10 L10.5 4.5" stroke="#fff" stroke-width="1.6" fill="none"/></svg><div class="cell" style="left:72px;top:24px;width:100px;text-align:right">5</div><div class="cell" style="left:178px;top:24px;width:72px;text-align:right;letter-spacing:1.00px;">19</div><div class="cell" style="left:260px;top:24px;letter-spacing:0.74px;">02/15/2006 05:05:03:000</div><div class="cell" style="left:2px;top:44px;width:40px;text-align:center;letter-spacing:1.00px;">2</div><div class="a" style="left:49px;top:47px;width:14px;height:14px;border-radius:2px;background:#6dbb3f"></div><svg class="a" style="left:49px;top:47px" width="14" height="14" viewBox="0 0 14 14"><path d="M3.5 7.5 L6 10 L10.5 4.5" stroke="#fff" stroke-width="1.6" fill="none"/></svg><div class="cell" style="left:72px;top:44px;width:100px;text-align:right">5</div><div class="cell" style="left:178px;top:44px;width:72px;text-align:right;letter-spacing:1.00px;">54</div><div class="cell" style="left:260px;top:44px;letter-spacing:0.74px;">02/15/2006 05:05:03:000</div><div class="cell" style="left:2px;top:64px;width:40px;text-align:center;letter-spacing:1.00px;">3</div><div class="a" style="left:49px;top:67px;width:14px;height:14px;border-radius:2px;background:#6dbb3f"></div><svg class="a" style="left:49px;top:67px" width="14" height="14" viewBox="0 0 14 14"><path d="M3.5 7.5 L6 10 L10.5 4.5" stroke="#fff" stroke-width="1.6" fill="none"/></svg><div class="cell" style="left:72px;top:64px;width:100px;text-align:right">5</div><div class="cell" style="left:178px;top:64px;width:72px;text-align:right;letter-spacing:1.00px;">85</div><div class="cell" style="left:260px;top:64px;letter-spacing:0.74px;">02/15/2006 05:05:03:000</div><div class="cell" style="left:2px;top:84px;width:40px;text-align:center;letter-spacing:1.00px;">4</div><div class="a" style="left:49px;top:87px;width:14px;height:14px;border-radius:2px;background:#6dbb3f"></div><svg class="a" style="left:49px;top:87px" width="14" height="14" viewBox="0 0 14 14"><path d="M3.5 7.5 L6 10 L10.5 4.5" stroke="#fff" stroke-width="1.6" fill="none"/></svg><div class="cell" style="left:72px;top:84px;width:100px;text-align:right">5</div><div class="cell" style="left:178px;top:84px;width:72px;text-align:right;letter-spacing:1.00px;">146</div><div class="cell" style="left:260px;top:84px;letter-spacing:0.74px;">02/15/2006 05:05:03:000</div><div class="cell" style="left:2px;top:104px;width:40px;text-align:center;letter-spacing:1.00px;">5</div><div class="a" style="left:49px;top:107px;width:14px;height:14px;border-radius:2px;background:#6dbb3f"></div><svg class="a" style="left:49px;top:107px" width="14" height="14" viewBox="0 0 14 14"><path d="M3.5 7.5 L6 10 L10.5 4.5" stroke="#fff" stroke-width="1.6" fill="none"/></svg><div class="cell" style="left:72px;top:104px;width:100px;text-align:right">5</div><div class="cell" style="left:178px;top:104px;width:72px;text-align:right;letter-spacing:1.00px;">171</div><div class="cell" style="left:260px;top:104px;letter-spacing:0.74px;">02/15/2006 05:05:03:000</div><div class="cell" style="left:2px;top:124px;width:40px;text-align:center;letter-spacing:1.00px;">6</div><div class="a" style="left:49px;top:127px;width:14px;height:14px;border-radius:2px;background:#6dbb3f"></div><svg class="a" style="left:49px;top:127px" width="14" height="14" viewBox="0 0 14 14"><path d="M3.5 7.5 L6 10 L10.5 4.5" stroke="#fff" stroke-width="1.6" fill="none"/></svg><div class="cell" style="left:72px;top:124px;width:100px;text-align:right">5</div><div class="cell" style="left:178px;top:124px;width:72px;text-align:right;letter-spacing:1.00px;">172</div><div class="cell" style="left:260px;top:124px;letter-spacing:0.74px;">02/15/2006 05:05:03:000</div><div class="cell" style="left:2px;top:144px;width:40px;text-align:center;letter-spacing:1.00px;">7</div><div class="a" style="left:49px;top:147px;width:14px;height:14px;border-radius:2px;background:#6dbb3f"></div><svg class="a" style="left:49px;top:147px" width="14" height="14" viewBox="0 0 14 14"><path d="M3.5 7.5 L6 10 L10.5 4.5" stroke="#fff" stroke-width="1.6" fill="none"/></svg><div class="cell" style="left:72px;top:144px;width:100px;text-align:right">5</div><div class="cell" style="left:178px;top:144px;width:72px;text-align:right;letter-spacing:1.00px;">202</div><div class="cell" style="left:260px;top:144px;letter-spacing:0.74px;">02/15/2006 05:05:03:000</div><div class="cell" style="left:2px;top:164px;width:40px;text-align:center;letter-spacing:1.00px;">8</div><div class="a" style="left:49px;top:167px;width:14px;height:14px;border-radius:2px;background:#6dbb3f"></div><svg class="a" style="left:49px;top:167px" width="14" height="14" viewBox="0 0 14 14"><path d="M3.5 7.5 L6 10 L10.5 4.5" stroke="#fff" stroke-width="1.6" fill="none"/></svg><div class="cell" style="left:72px;top:164px;width:100px;text-align:right">5</div><div class="cell" style="left:178px;top:164px;width:72px;text-align:right;letter-spacing:1.00px;">203</div><div class="cell" style="left:260px;top:164px;letter-spacing:0.74px;">02/15/2006 05:05:03:000</div><div class="cell" style="left:2px;top:184px;width:40px;text-align:center;letter-spacing:1.00px;">9</div><div class="a" style="left:49px;top:187px;width:14px;height:14px;border-radius:2px;background:#6dbb3f"></div><svg class="a" style="left:49px;top:187px" width="14" height="14" viewBox="0 0 14 14"><path d="M3.5 7.5 L6 10 L10.5 4.5" stroke="#fff" stroke-width="1.6" fill="none"/></svg><div class="cell" style="left:72px;top:184px;width:100px;text-align:right">5</div><div class="cell" style="left:178px;top:184px;width:72px;text-align:right;letter-spacing:1.00px;">286</div><div class="cell" style="left:260px;top:184px;letter-spacing:0.74px;">02/15/2006 05:05:03:000</div><div class="cell" style="left:2px;top:204px;width:40px;text-align:center;letter-spacing:1.00px;">10</div><div class="a" style="left:49px;top:207px;width:14px;height:14px;border-radius:2px;background:#6dbb3f"></div><svg class="a" style="left:49px;top:207px" width="14" height="14" viewBox="0 0 14 14"><path d="M3.5 7.5 L6 10 L10.5 4.5" stroke="#fff" stroke-width="1.6" fill="none"/></svg><div class="cell" style="left:72px;top:204px;width:100px;text-align:right">5</div><div class="cell" style="left:178px;top:204px;width:72px;text-align:right;letter-spacing:1.00px;">288</div><div class="cell" style="left:260px;top:204px;letter-spacing:0.74px;">02/15/2006 05:05:03:000</div><div class="cell" style="left:2px;top:224px;width:40px;text-align:center;letter-spacing:1.00px;">11</div><div class="a" style="left:49px;top:227px;width:14px;height:14px;border-radius:2px;background:#6dbb3f"></div><svg class="a" style="left:49px;top:227px" width="14" height="14" viewBox="0 0 14 14"><path d="M3.5 7.5 L6 10 L10.5 4.5" stroke="#fff" stroke-width="1.6" fill="none"/></svg><div class="cell" style="left:72px;top:224px;width:100px;text-align:right">5</div><div class="cell" style="left:178px;top:224px;width:72px;text-align:right;letter-spacing:1.00px;">316</div><div class="cell" style="left:260px;top:224px;letter-spacing:0.74px;">02/15/2006 05:05:03:000</div><div class="cell" style="left:2px;top:244px;width:40px;text-align:center;letter-spacing:1.00px;">12</div><div class="a" style="left:49px;top:247px;width:14px;height:14px;border-radius:2px;background:#6dbb3f"></div><svg class="a" style="left:49px;top:247px" width="14" height="14" viewBox="0 0 14 14"><path d="M3.5 7.5 L6 10 L10.5 4.5" stroke="#fff" stroke-width="1.6" fill="none"/></svg><div class="cell" style="left:72px;top:244px;width:100px;text-align:right">5</div><div class="cell" style="left:178px;top:244px;width:72px;text-align:right;letter-spacing:1.00px;">340</div><div class="cell" style="left:260px;top:244px;letter-spacing:0.74px;">02/15/2006 05:05:03:000</div><div class="cell" style="left:2px;top:264px;width:40px;text-align:center;letter-spacing:1.00px;">13</div><div class="a" style="left:49px;top:267px;width:14px;height:14px;border-radius:2px;background:#6dbb3f"></div><svg class="a" style="left:49px;top:267px" width="14" height="14" viewBox="0 0 14 14"><path d="M3.5 7.5 L6 10 L10.5 4.5" stroke="#fff" stroke-width="1.6" fill="none"/></svg><div class="cell" style="left:72px;top:264px;width:100px;text-align:right">5</div><div class="cell" style="left:178px;top:264px;width:72px;text-align:right;letter-spacing:1.00px;">369</div><div class="cell" style="left:260px;top:264px;letter-spacing:0.74px;">02/15/2006 05:05:03:000</div><div class="a" style="left:0;top:277px;width:1280px;height:1px;background:#a0a0a0"></div><svg class="a" style="left:14px;top:6px" width="16" height="15" viewBox="0 0 16 15"><path d="M1.8 1.2 H12.8 Q13.8 1.2 13.2 2.2 L8.6 8 L7.8 11.2 Q7.4 12 7 11 L6.4 8 L1.4 2.2 Q0.8 1.2 1.8 1.2 Z" fill="none" stroke="#444" stroke-width="1.1" stroke-linejoin="round"/><path d="M10.2 11 H14.8 L12.5 13.6 Z" fill="#1a1a1a"/></svg><div class="a" style="left:48px;top:6px;width:14px;height:14px;border-radius:3px;background:#2f8df5"></div><svg class="a" style="left:48px;top:6px" width="14" height="14" viewBox="0 0 14 14"><path d="M3 7.2 L6 10.2 L11 3.5" stroke="#fff" stroke-width="1.6" fill="none"/></svg><svg class="a" style="left:75px;top:8px" width="16" height="8" viewBox="0 0 16 8"><path d="M0.5 4H6" stroke="#111" stroke-width="1.1"/><path d="M4 1.8L7 4L4 6.2Z" fill="#111"/><circle cx="9.4" cy="4" r="2.1" fill="#f7db6a" stroke="#c9a02a" stroke-width="0.9"/></svg><div class="t" style="left:95px;top:5px;width:86px;text-align:center;color:#2a2a2a">actor_id</div><div class="t" style="left:177px;top:5px;width:77px;text-align:center;color:#2a2a2a">film_id</div><div class="t" style="left:254px;top:5px;width:172px;text-align:center;color:#2a2a2a">last_update</div></div><div class="nav" style="top:750px"></div><div class="a" style="left:0;top:776px;width:1280px;height:1px;background:#959595"></div><svg class="a" style="left:43px;top:757px" width="13" height="12" viewBox="0 0 13 12"><rect x="0.5" y="3" width="2.5" height="6" fill="#333"/><path d="M4 6 L12 0 V12 Z" fill="#333"/></svg><svg class="a" style="left:70px;top:757px" width="9" height="12" viewBox="0 0 9 12"><path d="M0.5 6 L8.5 0 V12 Z" fill="#333"/></svg><div class="inp" style="left:90px;top:752px;width:125px">1</div><svg class="a" style="left:226px;top:757px" width="9" height="12" viewBox="0 0 9 12"><path d="M8.5 6 L0.5 0 V12 Z" fill="#333"/></svg><svg class="a" style="left:249px;top:757px" width="13" height="12" viewBox="0 0 13 12"><path d="M9 6 L1 0 V12 Z" fill="#333"/><rect x="10" y="3" width="2.5" height="6" fill="#333"/></svg><div class="t" style="left:280px;top:755px;letter-spacing:0.29px;">from 29</div><svg class="a" style="left:370px;top:757px;opacity:1" width="16" height="15" viewBox="0 0 16 15"><rect x="0" y="0" width="13" height="13" fill="#404c52"/><rect x="0.90" y="0.90" width="2.3" height="2.3" fill="#6f9ec0"/><rect x="3.95" y="0.90" width="2.3" height="2.3" fill="#6f9ec0"/><rect x="7.00" y="0.90" width="2.3" height="2.3" fill="#6f9ec0"/><rect x="10.05" y="0.90" width="2.3" height="2.3" fill="#6f9ec0"/><rect x="0.90" y="3.95" width="2.3" height="2.3" fill="#ffffff"/><rect x="3.95" y="3.95" width="2.3" height="2.3" fill="#ffffff"/><rect x="7.00" y="3.95" width="2.3" height="2.3" fill="#ffffff"/><rect x="10.05" y="3.95" width="2.3" height="2.3" fill="#ffffff"/><rect x="0.90" y="7.00" width="2.3" height="2.3" fill="#ffffff"/><rect x="3.95" y="7.00" width="2.3" height="2.3" fill="#ffffff"/><rect x="7.00" y="7.00" width="2.3" height="2.3" fill="#ffffff"/><rect x="10.05" y="7.00" width="2.3" height="2.3" fill="#ffffff"/><rect x="0.90" y="10.05" width="2.3" height="2.3" fill="#8aa86a"/><rect x="3.95" y="10.05" width="2.3" height="2.3" fill="#8aa86a"/><rect x="7.00" y="10.05" width="2.3" height="2.3" fill="#8aa86a"/><rect x="10.05" y="10.05" width="2.3" height="2.3" fill="#8aa86a"/><circle cx="12.5" cy="10.5" r="3.6" fill="#78b84a"/><path d="M10.3 10.5H14.7M12.5 8.3V12.7" stroke="#fff" stroke-width="1.3"/></svg><svg class="a" style="left:395px;top:757px;opacity:0.45" width="16" height="15" viewBox="0 0 16 15"><rect x="0" y="0" width="13" height="13" fill="#404c52"/><rect x="0.90" y="0.90" width="2.3" height="2.3" fill="#6f9ec0"/><rect x="3.95" y="0.90" width="2.3" height="2.3" fill="#6f9ec0"/><rect x="7.00" y="0.90" width="2.3" height="2.3" fill="#6f9ec0"/><rect x="10.05" y="0.90" width="2.3" height="2.3" fill="#6f9ec0"/><rect x="0.90" y="3.95" width="2.3" height="2.3" fill="#ffffff"/><rect x="3.95" y="3.95" width="2.3" height="2.3" fill="#ffffff"/><rect x="7.00" y="3.95" width="2.3" height="2.3" fill="#ffffff"/><rect x="10.05" y="3.95" width="2.3" height="2.3" fill="#ffffff"/><rect x="0.90" y="7.00" width="2.3" height="2.3" fill="#d8b66e"/><rect x="3.95" y="7.00" width="2.3" height="2.3" fill="#d8b66e"/><rect x="7.00" y="7.00" width="2.3" height="2.3" fill="#d8b66e"/><rect x="10.05" y="7.00" width="2.3" height="2.3" fill="#d8b66e"/><rect x="0.90" y="10.05" width="2.3" height="2.3" fill="#8aa86a"/><rect x="3.95" y="10.05" width="2.3" height="2.3" fill="#8aa86a"/><rect x="7.00" y="10.05" width="2.3" height="2.3" fill="#8aa86a"/><rect x="10.05" y="10.05" width="2.3" height="2.3" fill="#8aa86a"/><circle cx="12.5" cy="10.5" r="3.6" fill="#78b84a"/><path d="M10.3 10.5H14.7M12.5 8.3V12.7" stroke="#fff" stroke-width="1.3"/></svg><svg class="a" style="left:420px;top:757px;opacity:1" width="16" height="15" viewBox="0 0 16 15"><rect x="0" y="0" width="13" height="13" fill="#404c52"/><rect x="0.90" y="0.90" width="2.3" height="2.3" fill="#6f9ec0"/><rect x="3.95" y="0.90" width="2.3" height="2.3" fill="#6f9ec0"/><rect x="7.00" y="0.90" width="2.3" height="2.3" fill="#6f9ec0"/><rect x="10.05" y="0.90" width="2.3" height="2.3" fill="#6f9ec0"/><rect x="0.90" y="3.95" width="2.3" height="2.3" fill="#ffffff"/><rect x="3.95" y="3.95" width="2.3" height="2.3" fill="#ffffff"/><rect x="7.00" y="3.95" width="2.3" height="2.3" fill="#ffffff"/><rect x="10.05" y="3.95" width="2.3" height="2.3" fill="#ffffff"/><rect x="0.90" y="7.00" width="2.3" height="2.3" fill="#d8b66e"/><rect x="3.95" y="7.00" width="2.3" height="2.3" fill="#d8b66e"/><rect x="7.00" y="7.00" width="2.3" height="2.3" fill="#d8b66e"/><rect x="10.05" y="7.00" width="2.3" height="2.3" fill="#d8b66e"/><rect x="0.90" y="10.05" width="2.3" height="2.3" fill="#ffffff"/><rect x="3.95" y="10.05" width="2.3" height="2.3" fill="#ffffff"/><rect x="7.00" y="10.05" width="2.3" height="2.3" fill="#ffffff"/><rect x="10.05" y="10.05" width="2.3" height="2.3" fill="#ffffff"/><circle cx="12.5" cy="10.5" r="3.6" fill="#d03a2a"/><path d="M10.3 10.5H14.7" stroke="#fff" stroke-width="1.4"/></svg><svg class="a" style="left:456px;top:759px" width="12" height="10" viewBox="0 0 12 10"><path d="M1 5.2 L4.5 8.6 L11 1.5" stroke="#8ac693" stroke-width="2" fill="none" stroke-linecap="round"/></svg><svg class="a" style="left:481px;top:757px" width="13" height="13" viewBox="0 0 13 13"><path d="M1.2 1.2 L11.8 11.8 M11.8 1.2 L1.2 11.8" stroke="#eeaaa4" stroke-width="1.8"/></svg><svg class="a" style="left:515px;top:756px" width="14" height="14" viewBox="0 0 14 14"><path d="M1 13 L1.8 9.8 L9.8 1.8 L12.2 4.2 L4.2 12.2 Z" fill="#8a8a8a"/><path d="M10.8 0.8 L13.2 3.2" stroke="#8a8a8a" stroke-width="1.6"/></svg><svg class="a" style="left:539px;top:757px" width="15" height="12" viewBox="0 0 15 12"><rect x="0.75" y="0.75" width="13.5" height="10.5" fill="none" stroke="#777" stroke-width="1.5"/><path d="M4 2.5V9.5M6.5 2.5V9.5M9 2.5V9.5M11.5 2.5V9.5" stroke="#777" stroke-width="1.2"/></svg><svg class="a" style="left:1253px;top:757px" width="15" height="14" viewBox="0 0 15 14"><path d="M6.5 0V12" stroke="#222" stroke-width="1.2"/><path d="M1.5 5.5H5M8 5.5H11.5" stroke="#3a86c4" stroke-width="1.5"/><path d="M0.8 5.5L3 3.6V7.4Z M12.2 5.5L10 3.6V7.4Z" fill="#3a86c4"/><path d="M7.6 10.2H14.2L10.9 13.8Z" fill="#111"/></svg><div class="a" style="left:0;top:777px;width:1280px;height:23px;background:linear-gradient(#e5e5e5,#d2d2d2 50%,#bdbdbd)"></div><div class="t" style="left:6px;top:781px;letter-spacing:0.1px">localhost</div><div class="a" style="left:0;top:795px;width:5px;height:5px;background:radial-gradient(circle at 100% 0,transparent 4.5px,#f2f2f2 5.5px)"></div><div class="a" style="left:1275px;top:795px;width:5px;height:5px;background:radial-gradient(circle at 0 0,transparent 4.5px,#f2f2f2 5.5px)"></div></body></html>
